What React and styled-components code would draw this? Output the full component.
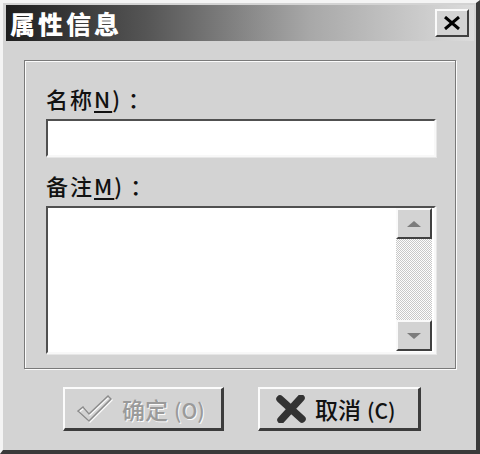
import React from 'react'
import styled, { createGlobalStyle } from 'styled-components'

const GlobalStyle = createGlobalStyle`
  html, body {
    margin: 0;
    padding: 0;
    background: #d3d3d3;
  }
  body {
    font-family: "Noto Sans CJK SC", "DejaVu Sans", sans-serif;
  }
`

const Window = styled.div`
  box-sizing: border-box;
  width: 480px;
  height: 454px;
  background: #d3d3d3;
  border-style: solid;
  border-width: 3px 4px 4px 3px;
  border-color: #f4f4f4 #3a3a3a #3a3a3a #f4f4f4;
  padding: 2px 2px 0 3px;
  display: flex;
  flex-direction: column;
`

const TitleBar = styled.div`
  height: 36px;
  background: linear-gradient(to right, #1e1e1e 0%, #555 30%, #a8a8a8 65%, #dcdcdc 100%);
  display: flex;
  align-items: center;
  justify-content: space-between;
  padding: 0 5px 0 4px;
`

const Title = styled.div`
  color: #fff;
  font-size: 25px;
  font-weight: 900;
  letter-spacing: 3px;
  line-height: 1;
`

const CloseButton = styled.div`
  box-sizing: border-box;
  width: 34px;
  height: 28px;
  background: #d3d3d3;
  border-style: solid;
  border-width: 2px;
  border-color: #fafafa #404040 #404040 #fafafa;
  display: flex;
  align-items: center;
  justify-content: center;
`

const Body = styled.div`
  flex: 1;
  display: flex;
  flex-direction: column;
  padding: 19px 18px 0 18px;
`

const GroupBox = styled.div`
  height: 309px;
  box-sizing: border-box;
  border: 1px solid #7a7a7a;
  box-shadow: inset 1px 1px #fbfbfb, 1px 1px #fbfbfb;
  padding: 23px 19px 0 21px;
  display: flex;
  flex-direction: column;
`

const Label = styled.div`
  font-size: 22px;
  font-weight: 500;
  letter-spacing: 2px;
  line-height: 28px;
  color: #111;
  height: ${p => p.$h}px;
  u {
    text-decoration-thickness: 2px;
    text-underline-offset: 3px;
  }
`

const Colon = styled.span`
  margin-left: 6px;
`

const Sunken = styled.div`
  box-sizing: border-box;
  height: ${p => p.$h}px;
  background: #fff;
  border-style: solid;
  border-width: 2px;
  border-color: #505050 #f8f8f8 #f8f8f8 #505050;
  box-shadow: 1px 1px #e6e6e6;
  display: flex;
  justify-content: flex-end;
  margin-bottom: ${p => p.$mb}px;
`

const ScrollBar = styled.div`
  width: 36px;
  display: flex;
  flex-direction: column;
  background: repeating-conic-gradient(#fdfdfd 0 25%, #c8c8c8 0 50%) 0 0 / 2px 2px;
  margin-right: 2px;
  margin-bottom: 1px;
`

const ScrollButton = styled.div`
  box-sizing: border-box;
  height: 31px;
  background: #d3d3d3;
  border-style: solid;
  border-width: 2px;
  border-color: #fafafa #404040 #404040 #fafafa;
  display: flex;
  align-items: center;
  justify-content: center;
`

const Track = styled.div`
  flex: 1;
`

const Arrow = styled.div`
  width: 0;
  height: 0;
  border-left: 7px solid transparent;
  border-right: 7px solid transparent;
  ${p => (p.$down ? 'border-top: 6px solid #7c7c7c;' : 'border-bottom: 6px solid #7c7c7c;')}
`

const ButtonRow = styled.div`
  display: flex;
  justify-content: center;
  gap: 34px;
  margin-top: 18px;
  padding-left: 4px;
`

const Button = styled.div`
  box-sizing: border-box;
  width: ${p => p.$w}px;
  height: 44px;
  background: #d3d3d3;
  border-style: solid;
  border-width: 2px 3px 3px 2px;
  border-color: #fbfbfb #3c3c3c #3c3c3c #fbfbfb;
  display: flex;
  align-items: center;
  gap: 9px;
  padding-left: ${p => p.$pl}px;
  font-size: 23px;
  font-weight: 500;
  color: ${p => (p.$disabled ? '#9a9a9a' : '#111')};
  text-shadow: ${p => (p.$disabled ? '1px 1px #fbfbfb' : 'none')};
`

const Small = styled.span`
  font-size: 21px;
  margin-left: 6px;
`

const CheckIcon = () => (
  <svg width="38" height="32" viewBox="0 0 38 32">
    <path d="M3 18 L8 14 L14 21 L33 3 L36 6 L14 28 Z" fill="none" stroke="#fbfbfb" strokeWidth="1.5" transform="translate(1 1)" />
    <path d="M3 18 L8 14 L14 21 L33 3 L36 6 L14 28 Z" fill="none" stroke="#8c8c8c" strokeWidth="1.5" />
  </svg>
)

const XIcon = () => (
  <svg width="30" height="28" viewBox="0 0 30 28">
    <path d="M4 4 L26 24 M25 3 L5 25" stroke="#333" strokeWidth="7.5" strokeLinecap="round" />
  </svg>
)

const CloseX = () => (
  <svg width="18" height="14" viewBox="0 0 18 14">
    <path d="M2 1 L16 13 M16 1 L2 13" stroke="#000" strokeWidth="3" />
  </svg>
)

const App = () => {
  return (
    <>
      <GlobalStyle />
      <Window>
        <TitleBar>
          <Title>属性信息</Title>
          <CloseButton>
            <CloseX />
          </CloseButton>
        </TitleBar>
        <Body>
          <GroupBox>
            <Label $h={35}>
              名称<u>N</u>)<Colon>：</Colon>
            </Label>
            <Sunken $h={38} $mb={14} />
            <Label $h={35}>
              备注<u>M</u>)<Colon>：</Colon>
            </Label>
            <Sunken $h={148} $mb={0}>
              <ScrollBar>
                <ScrollButton>
                  <Arrow />
                </ScrollButton>
                <Track />
                <ScrollButton>
                  <Arrow $down />
                </ScrollButton>
              </ScrollBar>
            </Sunken>
          </GroupBox>
          <ButtonRow>
            <Button $w={161} $pl={10} $disabled>
              <CheckIcon />
              <span>
                确定<Small>(O)</Small>
              </span>
            </Button>
            <Button $w={163} $pl={16}>
              <XIcon />
              <span>
                取消<Small>(C)</Small>
              </span>
            </Button>
          </ButtonRow>
        </Body>
      </Window>
    </>
  )
}

export default App
